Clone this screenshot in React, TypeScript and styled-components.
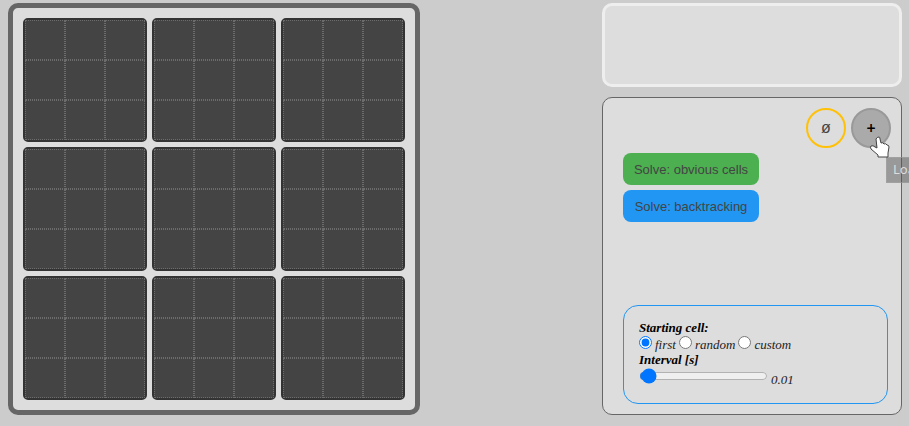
import React, { useState } from "react";
import styled, { createGlobalStyle } from "styled-components";

const GlobalStyle = createGlobalStyle`
  *, *::before, *::after { box-sizing: border-box; }
  html { background: #ccc; }
  body { margin: 0; background: #ccc; overflow: hidden; }
`;

const Page = styled.main`
  display: flex;
  justify-content: space-between;
  align-items: stretch;
  padding: 3px 7px 11px 8px;
`;

const Board = styled.section`
  display: grid;
  grid-template-columns: repeat(3, auto);
  gap: 5px;
  padding: 10px;
  background: #ddd;
  border: 5px solid #666;
  border-radius: 10px;
`;

const Block = styled.div`
  display: grid;
  grid-template-columns: repeat(3, 40px);
  grid-auto-rows: 40px;
  background: #444;
  border: 2px solid #333;
  border-radius: 5px;
`;

const Cell = styled.div`
  border: 1px dotted #6c6c6c;
`;

const Sidebar = styled.aside`
  display: flex;
  flex-direction: column;
  gap: 10px;
  width: 300px;
`;

const MessageBox = styled.section`
  height: 84px;
  background: #ddd;
  border: 3px solid #eee;
  border-radius: 10px;
`;

const Controls = styled.section`
  display: flex;
  flex: 1;
  flex-direction: column;
  padding: 10px 13px 10px 20px;
  background: #ddd;
  border: 1px solid #666;
  border-radius: 10px;
`;

const RoundButtons = styled.div`
  display: flex;
  justify-content: flex-end;
  gap: 5px;
  margin: 0 -3px 5px 0;
`;

const ButtonHolder = styled.div`
  position: relative;
  display: flex;
`;

const RoundButton = styled.button<{ $active?: boolean }>`
  width: 40px;
  height: 40px;
  padding: 0;
  color: ${(p) => (p.$active ? "#000" : "#444")};
  background: ${(p) => (p.$active ? "#aaa" : "transparent")};
  border: 2px solid ${(p) => (p.$active ? "#999" : "#ffc107")};
  border-radius: 50%;
  font: ${(p) =>
    p.$active
      ? '600 16px "Noto Sans", sans-serif'
      : '16px "Liberation Sans", Arial, sans-serif'};
`;

const Pointer = styled.svg`
  position: absolute;
  left: 18px;
  top: 28px;
  pointer-events: none;
`;

const Tooltip = styled.span`
  position: absolute;
  left: 35px;
  top: 49px;
  padding: 0 6px 1px;
  color: #ddd;
  background: rgba(85, 85, 85, 0.5);
  border: 1px solid rgba(170, 170, 170, 0.5);
  font: 13px/23px "Noto Sans", sans-serif;
  white-space: nowrap;
`;

const SolveButtons = styled.div`
  display: flex;
  flex-direction: column;
  align-items: flex-start;
  gap: 5px;
`;

const SolveButton = styled.button<{ $color: string }>`
  width: 136px;
  height: 32px;
  padding: 0;
  color: #444;
  background: ${(p) => p.$color};
  border: 0;
  border-radius: 8px;
  font: 13px "Liberation Sans", Arial, sans-serif;
`;

const Settings = styled.form`
  margin-top: auto;
  padding: 14px 15px 15px;
  border: 1px solid #2196f3;
  border-radius: 15px;
  color: #000;
  font: italic 13px/16px "Liberation Serif", "Times New Roman", serif;
`;

const Title = styled.div`
  display: block;
  font-weight: bold;
`;

const Choices = styled.div`
  display: flex;
  gap: 3px;
  height: 16px;
`;

const Choice = styled.label`
  display: flex;
  align-items: flex-start;
  gap: 3px;
  color: #222;
`;

const Radio = styled.input`
  width: 13px;
  height: 13px;
  margin: 0;
`;

const ChoiceText = styled.span`
  padding-top: 1px;
`;

const SliderRow = styled.div`
  display: flex;
  gap: 3px;
`;

const Slider = styled.input`
  width: 129px;
  height: 16px;
  margin: 0;
`;

const SliderValue = styled.output`
  padding-top: 4px;
  color: #222;
`;

const nine = Array.from({ length: 9 }, (_, i) => i);
const starts = ["first", "random", "custom"];

export default function App() {
  const [start, setStart] = useState("first");
  const [interval, setInterval] = useState("0.01");

  return (
    <>
      <GlobalStyle />
      <Page>
        <Board aria-label="Sudoku board">
          {nine.map((block) => (
            <Block key={block}>
              {nine.map((cell) => (
                <Cell key={cell} />
              ))}
            </Block>
          ))}
        </Board>
        <Sidebar>
          <MessageBox aria-live="polite" />
          <Controls>
            <RoundButtons>
              <RoundButton type="button" aria-label="Clear board">ø</RoundButton>
              <ButtonHolder>
                <RoundButton type="button" $active aria-describedby="load-tip">+</RoundButton>
                <Tooltip id="load-tip" role="tooltip">Load</Tooltip>
                <Pointer width="22" height="24" viewBox="0 0 22 24" aria-hidden="true">
                  <path
                    d="M7 3 Q8 1 10 1 Q11 1 11 3 L12 7 Q14 6 15 8 Q17 7 18 9 Q20 9 20 11 L19 17 L19 21 L9 21 L9 19 L2 13 Q1 11 2 10 Q4 9 6 11 L8 12 Z"
                    fill="#fff"
                    stroke="#444"
                    strokeLinejoin="round"
                  />
                </Pointer>
              </ButtonHolder>
            </RoundButtons>
            <SolveButtons>
              <SolveButton type="button" $color="#4caf50">Solve: obvious cells</SolveButton>
              <SolveButton type="button" $color="#2196f3">Solve: backtracking</SolveButton>
            </SolveButtons>
            <Settings>
              <Title id="start-title">Starting cell:</Title>
              <Choices role="radiogroup" aria-labelledby="start-title">
                {starts.map((name) => (
                  <Choice key={name}>
                    <Radio
                      type="radio"
                      name="start"
                      checked={start === name}
                      onChange={() => setStart(name)}
                    />
                    <ChoiceText>{name}</ChoiceText>
                  </Choice>
                ))}
              </Choices>
              <Title as="label" htmlFor="interval">Interval [s]</Title>
              <SliderRow>
                <Slider
                  id="interval"
                  type="range"
                  min="0"
                  max="0.5"
                  step="0.01"
                  value={interval}
                  onChange={(e) => setInterval(e.target.value)}
                />
                <SliderValue htmlFor="interval">{interval}</SliderValue>
              </SliderRow>
            </Settings>
          </Controls>
        </Sidebar>
      </Page>
    </>
  );
}
